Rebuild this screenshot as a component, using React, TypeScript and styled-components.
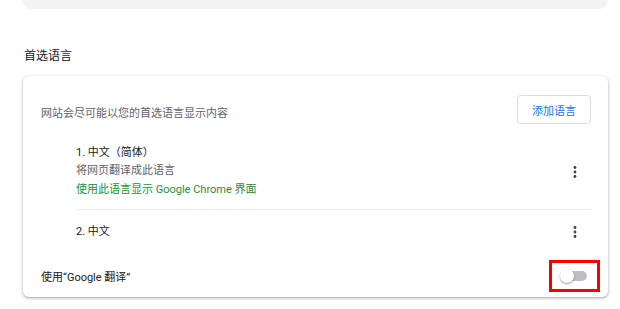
import { createGlobalStyle } from 'styled-components';
import styled from 'styled-components';

const GlobalStyle = createGlobalStyle`
  html, body {
    margin: 0;
    padding: 0;
    background: #ffffff;
  }
  body {
    font-family: Roboto, 'Noto Sans CJK SC', sans-serif;
    color: #202124;
    -webkit-font-smoothing: antialiased;
  }
`;

const Page = styled.div`
  width: 620px;
  height: 309px;
  overflow: hidden;
  padding: 0 12px 0 23px;
  box-sizing: border-box;
`;

const TopCard = styled.div`
  height: 9px;
  margin-left: -1px;
  background: #f1f3f4;
  border-radius: 0 0 12px 12px;
`;

const SectionTitle = styled.h2`
  margin: 0;
  padding: 37px 0 0 1px;
  height: 30px;
  font-size: 12px;
  font-weight: 400;
  line-height: 20px;
  color: #202124;
`;

const Card = styled.section`
  background: #fff;
  border-radius: 6px;
  box-shadow: 0 1px 2px 0 rgba(60, 64, 67, 0.3),
    0 1px 3px 1px rgba(60, 64, 67, 0.15);
  padding: 0 17px 0 18px;
  height: 221px;
  box-sizing: border-box;
`;

const HeaderRow = styled.div`
  display: flex;
  align-items: center;
  justify-content: space-between;
  padding: 19px 0 10px;
`;

const Description = styled.span`
  font-size: 11px;
  color: #5f6368;
  margin-top: 5px;
`;

const AddButton = styled.button`
  height: 29px;
  width: 74px;
  padding: 0;
  border: 1px solid #dadce0;
  border-radius: 4px;
  background: #fff;
  color: #1a73e8;
  font-family: inherit;
  font-size: 11px;
  margin-right: 0;
`;

const LangList = styled.ul`
  list-style: none;
  margin: 0 0 0 35px;
  padding: 0;
`;

const LangItem = styled.li<{ $tall?: boolean; $divider?: boolean }>`
  display: flex;
  align-items: center;
  justify-content: space-between;
  height: ${(p) => (p.$tall ? '76px' : '44px')};
  border-bottom: ${(p) => (p.$divider ? '1px solid #e8eaed' : 'none')};
  box-sizing: border-box;
`;

const LangText = styled.div`
  display: flex;
  flex-direction: column;
  font-size: 11px;
  line-height: 18.5px;
`;

const Line = styled.span<{ $tone?: 'main' | 'sub' | 'green' }>`
  color: ${(p) =>
    p.$tone === 'sub' ? '#5f6368' : p.$tone === 'green' ? '#1e8e3e' : '#202124'};
`;

const MoreButton = styled.button`
  width: 32px;
  height: 32px;
  border: none;
  background: none;
  padding: 0;
  display: flex;
  align-items: center;
  justify-content: center;
  color: #5f6368;
`;

const ToggleRow = styled.div`
  display: flex;
  align-items: center;
  justify-content: space-between;
  height: 43px;
  font-size: 11px;
`;

const ToggleWrap = styled.div`
  position: relative;
  width: 27px;
  height: 14px;
  margin-right: 4px;
`;

const Track = styled.div`
  position: absolute;
  left: 2px;
  top: 2px;
  width: 25px;
  height: 10px;
  border-radius: 5px;
  background: #bdc1c6;
`;

const Knob = styled.div`
  position: absolute;
  left: 0;
  top: 0;
  width: 14px;
  height: 14px;
  border-radius: 50%;
  background: #fff;
  box-shadow: 0 1px 2px rgba(0, 0, 0, 0.4);
`;

const Highlight = styled.div`
  position: absolute;
  left: -11px;
  right: -13px;
  top: -9px;
  bottom: -9px;
  border: 3px solid #f70000;
`;

const Kebab = () => (
  <svg width="4" height="14" viewBox="0 0 4 14">
    <circle cx="2" cy="2.5" r="1.4" fill="#3c4043" />
    <circle cx="2" cy="7" r="1.4" fill="#3c4043" />
    <circle cx="2" cy="11.5" r="1.4" fill="#3c4043" />
  </svg>
);

export default function App() {
  return (
    <>
      <GlobalStyle />
      <Page>
        <TopCard />
        <SectionTitle>首选语言</SectionTitle>
        <Card>
          <HeaderRow>
            <Description>网站会尽可能以您的首选语言显示内容</Description>
            <AddButton>添加语言</AddButton>
          </HeaderRow>
          <LangList>
            <LangItem $tall $divider>
              <LangText>
                <Line>1. 中文（简体）</Line>
                <Line $tone="sub">将网页翻译成此语言</Line>
                <Line $tone="green">使用此语言显示 Google Chrome 界面</Line>
              </LangText>
              <MoreButton>
                <Kebab />
              </MoreButton>
            </LangItem>
            <LangItem>
              <LangText>
                <Line>2. 中文</Line>
              </LangText>
              <MoreButton>
                <Kebab />
              </MoreButton>
            </LangItem>
          </LangList>
          <ToggleRow>
            <span>使用“Google 翻译”</span>
            <ToggleWrap>
              <Track />
              <Knob />
              <Highlight />
            </ToggleWrap>
          </ToggleRow>
        </Card>
      </Page>
    </>
  );
}
